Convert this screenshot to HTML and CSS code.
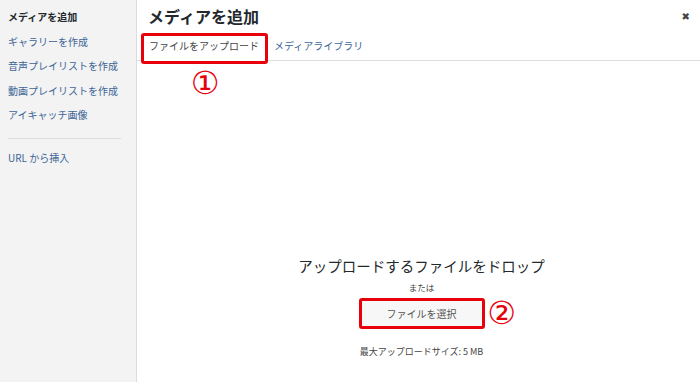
FILE: index.html
```html
<!DOCTYPE html>
<html lang="ja">
<head>
    <meta charset="UTF-8">
    <meta name="viewport" content="width=device-width, initial-scale=1.0">
    <title>メディアを追加</title>
    <link rel="stylesheet" href="styles.css">
</head>
<body>
    <div class="modal">
        <aside class="menu">
            <ul class="menu-list">
                <li class="menu-item active">メディアを追加</li>
                <li class="menu-item">ギャラリーを作成</li>
                <li class="menu-item">音声プレイリストを作成</li>
                <li class="menu-item">動画プレイリストを作成</li>
                <li class="menu-item">アイキャッチ画像</li>
            </ul>
            <div class="menu-sep"></div>
            <ul class="menu-list">
                <li class="menu-item url">URL から挿入</li>
            </ul>
        </aside>
        <main class="frame">
            <div class="frame-title">
                <h1>メディアを追加</h1>
                <span class="close">&#10006;</span>
            </div>
            <nav class="router">
                <span class="tab current">ファイルをアップロード</span>
                <span class="tab">メディアライブラリ</span>
                <span class="mark mark-1">&#9312;</span>
            </nav>
            <div class="uploader">
                <p class="drop-title">アップロードするファイルをドロップ</p>
                <p class="or">または</p>
                <div class="select-row">
                    <button class="select-btn">ファイルを選択</button>
                    <span class="mark mark-2">&#9313;</span>
                </div>
                <p class="max-size">最大アップロードサイズ: 5 MB</p>
            </div>
        </main>
    </div>
</body>
</html>
```

FILE: styles.css
```css
* {
    box-sizing: border-box;
    margin: 0;
    padding: 0;
}

body {
    font-family: "Noto Sans CJK JP", "Noto Sans", sans-serif;
    background: #fff;
    color: #23282d;
    width: 700px;
    height: 382px;
    overflow: hidden;
}

.modal {
    display: flex;
    height: 382px;
}

/* left menu */
.menu {
    width: 137px;
    flex-shrink: 0;
    background: #f3f3f3;
    border-right: 1px solid #dcdcdc;
    padding-top: 5px;
}

.menu-list {
    list-style: none;
}

.menu-item {
    font-size: 10px;
    line-height: 24.5px;
    padding-left: 8px;
    color: #3d6596;
    white-space: nowrap;
}

.menu-item.active {
    color: #23282d;
    font-weight: bold;
}

.menu-sep {
    height: 1px;
    background: #dddddd;
    margin: 10px 15px 7px 8px;
}

/* main frame */
.frame {
    flex: 1;
    display: flex;
    flex-direction: column;
}

.frame-title {
    height: 32px;
    display: flex;
    align-items: center;
    justify-content: space-between;
    padding: 0 10px 0 11px;
}

.frame-title h1 {
    font-size: 16px;
    font-weight: bold;
    line-height: 32px;
}

.close {
    font-family: "DejaVu Sans", sans-serif;
    font-size: 10px;
    color: #444;
}

.router {
    position: relative;
    height: 29px;
    display: flex;
    align-items: flex-start;
    padding: 1px 0 0 4px;
    border-bottom: 1px solid #dddddd;
}

.tab {
    font-size: 10px;
    line-height: 20px;
    color: #3d6596;
    padding-top: 3px;
    margin-left: 6px;
    white-space: nowrap;
}

.tab.current {
    color: #444;
    background: #fff;
    width: 127px;
    height: 31px;
    padding: 0 0 0 5px;
    margin-left: 0;
    border: 3px solid #e8000b;
    border-radius: 3px;
    position: relative;
    z-index: 1;
}

/* annotation numbers */
.mark {
    position: absolute;
    width: 32px;
    text-align: center;
    font-family: "DejaVu Sans", sans-serif;
    font-size: 32px;
    line-height: 32px;
    color: #e6000a;
}

.mark-1 {
    left: 52px;
    top: 35px;
}

/* upload area */
.uploader {
    flex: 1;
    display: flex;
    flex-direction: column;
    align-items: center;
    padding-left: 6px;
}

.drop-title {
    font-size: 14.5px;
    line-height: 20px;
    margin-top: 195px;
    color: #23282d;
}

.or {
    font-size: 8.5px;
    line-height: 12px;
    margin-top: 5px;
    color: #444;
}

.select-row {
    position: relative;
    margin-top: 5px;
}

.select-btn {
    font-family: inherit;
    font-size: 10px;
    color: #555;
    width: 126px;
    height: 31px;
    background: #f7f7f7;
    border: 3px solid #e8000b;
    border-radius: 3px;
}

.mark-2 {
    left: 127px;
    top: -1px;
}

.max-size {
    font-size: 9px;
    line-height: 12px;
    margin-top: 17px;
    color: #444;
}
```
